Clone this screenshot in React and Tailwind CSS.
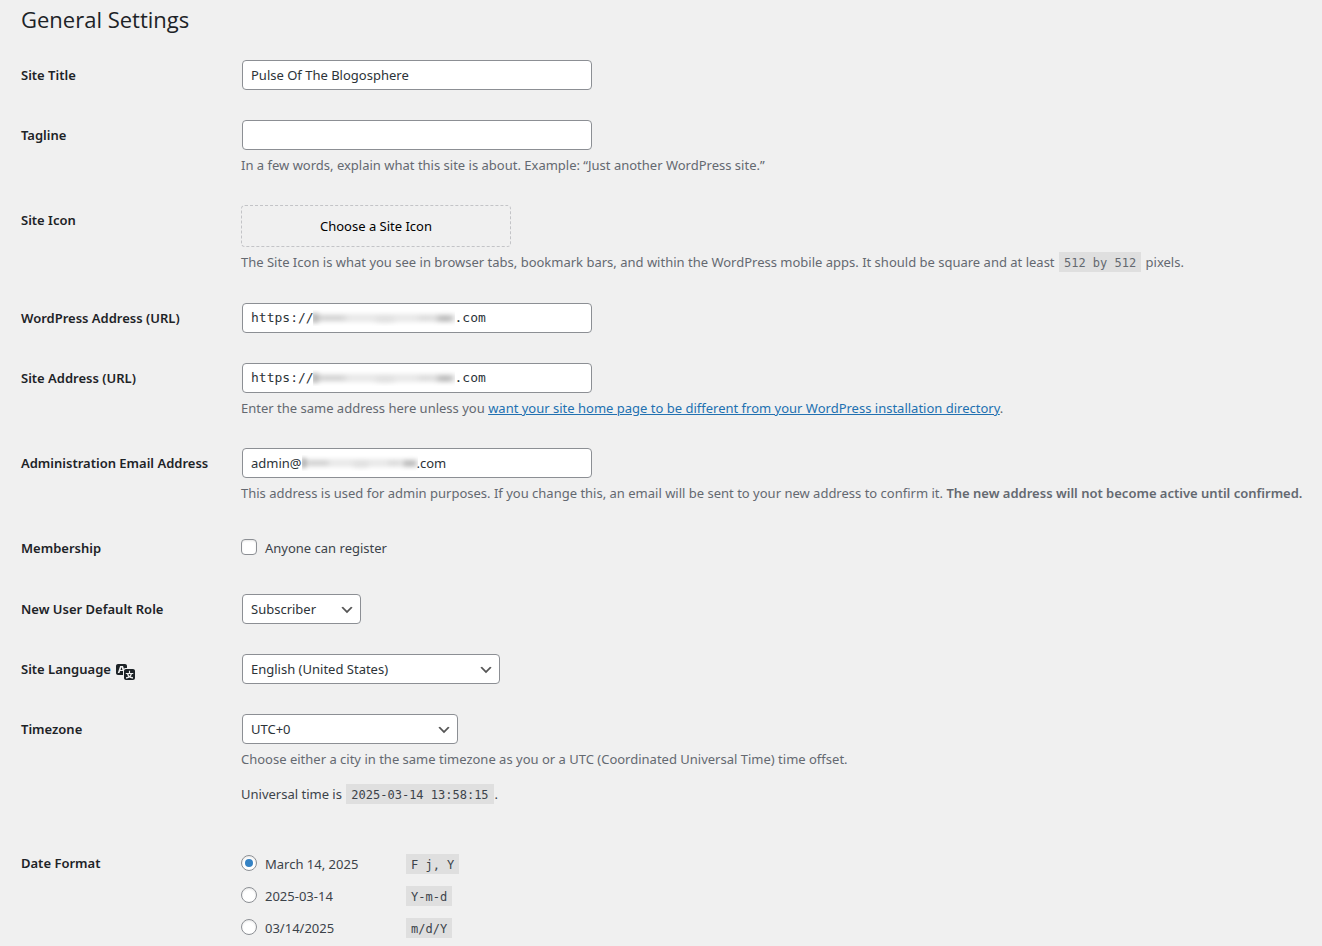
import React, { useState } from "react";

const FIELD =
  "h-[30px] rounded-[4px] border border-[#8c8f94] bg-white px-2 text-[#2c3338] outline-none focus:border-[#2271b1] focus:ring-1 focus:ring-[#2271b1]";
const NBSP = "\u00a0";

function Row({ label, htmlFor, icon, children }) {
  const cls = "w-[200px] shrink-0 pt-5 font-semibold text-[#1d2327]";
  return (
    <div className="flex gap-5">
      {htmlFor ? (
        <label htmlFor={htmlFor} className={cls}>
          {label}
          {icon}
        </label>
      ) : (
        <div className={cls}>{label}</div>
      )}
      <div className="min-w-0 flex-1 py-[15px]">{children}</div>
    </div>
  );
}

function TextField({ id, type = "text", mono, defaultValue = "", children, ...rest }) {
  return (
    <div className="relative mx-px w-[350px] max-w-full">
      <input
        id={id}
        type={type}
        defaultValue={defaultValue}
        className={`${FIELD} block w-full ${mono ? "pb-[2px] font-['DejaVu_Sans_Mono',monospace]" : ""}`}
        {...rest}
      />
      {children}
    </div>
  );
}

function Description({ children }) {
  return <p className="mt-[5px] text-[#646970]">{children}</p>;
}

function Code({ children }) {
  return (
    <code className="mx-px inline-block h-5 bg-[#dfdfdf] px-[5px] align-top font-['DejaVu_Sans_Mono',monospace] text-[12px] leading-[22px]">
      {children}
    </code>
  );
}

function SelectField({ id, width, options }) {
  return (
    <div className={`relative mx-px max-w-full ${width}`}>
      <select id={id} className={`${FIELD} block w-full appearance-none pr-6`}>
        {options.map((o) => (
          <option key={o}>{o}</option>
        ))}
      </select>
      <svg
        viewBox="0 0 20 20"
        className="pointer-events-none absolute top-2 right-[6px] size-4"
        fill="#555"
        aria-hidden="true"
      >
        <path d="M5 6l5 5 5-5 2 1-7 7-7-7 2-1z" />
      </svg>
    </div>
  );
}

function TranslationIcon() {
  return (
    <svg viewBox="0 0 20 20" className="mt-[2px] ml-[5px] inline-block size-5 align-top" fill="currentColor" aria-hidden="true">
      <path d="M11 7H9.49c-.63 0-1.25.3-1.59.7L7 5H4.13l-2.39 7h1.69l.74-2H7v4H2c-1.1 0-2-.9-2-2V5c0-1.1.9-2 2-2h7c1.1 0 2 .9 2 2v2zM6.51 9H4.49l1-2.93zM10 8h7c1.1 0 2 .9 2 2v7c0 1.1-.9 2-2 2h-7c-1.1 0-2-.9-2-2v-7c0-1.1.9-2 2-2zm7.25 5v-1.08h-3.17V9.75h-1.16v2.17H9.75V13h1.28c.11.85.56 1.85 1.28 2.62-.87.36-1.89.62-2.31.62-.01.02.22.97.2 1.46.84 0 2.21-.5 3.28-1.15 1.09.65 2.48 1.15 3.34 1.15-.02-.49.2-1.44.2-1.46-.43 0-1.49-.27-2.38-.63.7-.77 1.14-1.77 1.25-2.61h1.36zm-3.81 1.93c-.5-.46-.85-1.13-1.01-1.93h2.09c-.17.8-.51 1.47-1 1.93l-.04.03s-.03-.02-.04-.03z" />
    </svg>
  );
}

function Redaction({ className }) {
  return (
    <svg
      viewBox="0 0 140 16"
      preserveAspectRatio="none"
      className={`pointer-events-none absolute top-[7px] h-4 ${className}`}
      aria-hidden="true"
    >
      <defs>
        <filter id="smudge" x="-10%" y="-100%" width="120%" height="300%">
          <feGaussianBlur stdDeviation="3 2" />
        </filter>
      </defs>
      <g filter="url(#smudge)">
        <rect x="2" y="4" width="138" height="8" fill="#e9e9e9" />
        <rect x="0" y="3" width="4" height="10" fill="#7c7c7c" />
        <rect x="6" y="5" width="26" height="6" fill="#d6d6d6" />
        <rect x="62" y="5" width="18" height="8" fill="#e2e2e2" />
        <rect x="104" y="5" width="14" height="6" fill="#dedede" />
        <rect x="122" y="5" width="16" height="7" fill="#c0c0c0" />
      </g>
    </svg>
  );
}

const DATE_FORMATS = [
  ["March 14, 2025", "F j, Y"],
  ["2025-03-14", "Y-m-d"],
  ["03/14/2025", "m/d/Y"],
];

export default function App() {
  const [format, setFormat] = useState("F j, Y");
  return (
    <main className="min-h-screen bg-[#f0f0f0] pl-[21px] font-['Noto_Sans',sans-serif] text-[13px] leading-5 text-[#3c434a]">
      <h1 className="pt-1 font-['Open_Sans',sans-serif] text-[22px] leading-[30px] text-[#1d2327]">
        General Settings
      </h1>
      <form className="pt-[11px]" onSubmit={(e) => e.preventDefault()}>
        <Row label="Site Title" htmlFor="title">
          <TextField id="title" defaultValue="Pulse Of The Blogosphere" />
        </Row>

        <Row label="Tagline" htmlFor="tagline">
          <TextField id="tagline" />
          <Description>
            In a few words, explain what this site is about. Example: “Just another WordPress site.”
          </Description>
        </Row>

        <Row label="Site Icon">
          <button
            type="button"
            className="block h-[42px] w-[270px] cursor-pointer rounded-[4px] border border-dashed border-[#c3c4c7] text-black"
          >
            Choose a Site Icon
          </button>
          <div className="pb-px">
            <Description>
              The Site Icon is what you see in browser tabs, bookmark bars, and within the WordPress mobile apps. It
              should be square and at least <Code>512 by 512</Code> pixels.
            </Description>
          </div>
        </Row>

        <Row label="WordPress Address (URL)" htmlFor="siteurl">
          <TextField id="siteurl" mono defaultValue={`https://${NBSP.repeat(18)}.com`}>
            <Redaction className="left-[71px] w-[142px]" />
          </TextField>
        </Row>

        <Row label="Site Address (URL)" htmlFor="home">
          <TextField id="home" mono defaultValue={`https://${NBSP.repeat(18)}.com`}>
            <Redaction className="left-[71px] w-[142px]" />
          </TextField>
          <Description>
            Enter the same address here unless you{" "}
            <a href="#directory" className="text-[#2271b1] underline">
              want your site home page to be different from your WordPress installation directory
            </a>
            .
          </Description>
        </Row>

        <Row label="Administration Email Address" htmlFor="admin-email">
          <TextField id="admin-email" defaultValue={`admin@${NBSP.repeat(34)}.com`}>
            <Redaction className="left-[60px] w-[116px]" />
          </TextField>
          <Description>
            This address is used for admin purposes. If you change this, an email will be sent to your new address to
            confirm it. <strong className="font-semibold">The new address will not become active until confirmed.</strong>
          </Description>
        </Row>

        <Row label="Membership">
          <label className="mb-px flex h-[30px] items-center gap-2">
            <input
              type="checkbox"
              className="mb-[2px] size-4 appearance-none rounded-[4px] border border-[#8c8f94] bg-white shadow-[inset_0_1px_2px_rgba(0,0,0,0.1)] checked:bg-[#3582c4]"
            />
            Anyone can register
          </label>
        </Row>

        <Row label="New User Default Role" htmlFor="role">
          <SelectField
            id="role"
            width="w-[119px]"
            options={["Subscriber", "Contributor", "Author", "Editor", "Administrator"]}
          />
        </Row>

        <Row label="Site Language" htmlFor="language" icon={<TranslationIcon />}>
          <SelectField id="language" width="w-[258px]" options={["English (United States)"]} />
        </Row>

        <Row label="Timezone" htmlFor="timezone">
          <SelectField id="timezone" width="w-[216px]" options={["UTC+0"]} />
          <Description>
            Choose either a city in the same timezone as you or a UTC (Coordinated Universal Time) time offset.
          </Description>
          <p className="mt-[15px] mb-[14px]">
            Universal time is <Code>2025-03-14 13:58:15</Code>.
          </p>
        </Row>

        <Row label="Date Format">
          {DATE_FORMATS.map(([text, code]) => (
            <label key={code} className="flex h-8 items-center">
              <input
                type="radio"
                name="date-format"
                checked={format === code}
                onChange={() => setFormat(code)}
                className="mr-2 mb-[2px] grid size-4 appearance-none place-items-center rounded-full border border-[#8c8f94] bg-white shadow-[inset_0_1px_2px_rgba(0,0,0,0.1)] before:size-2 before:rounded-full checked:before:bg-[#3582c4]"
              />
              <span className="w-[140px]">{text}</span>
              <Code>{code}</Code>
            </label>
          ))}
        </Row>
      </form>
    </main>
  );
}
